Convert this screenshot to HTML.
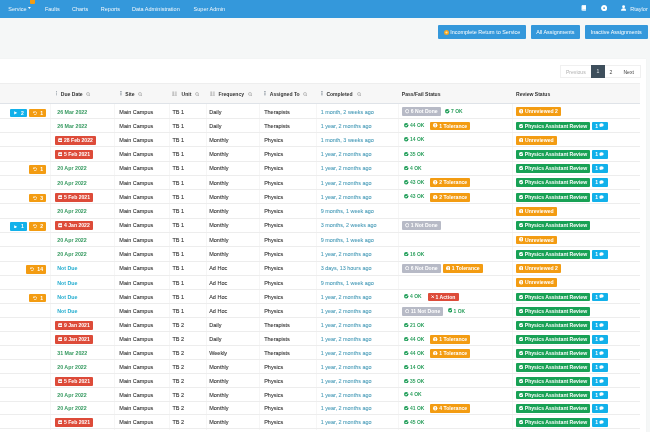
<!DOCTYPE html>
<html><head><meta charset="utf-8"><title>Assignments</title><style>
*{box-sizing:border-box;margin:0;padding:0}
html,body{width:650px;height:432px;overflow:hidden;background:#f5f7f7;font-family:"Liberation Sans",sans-serif;}
#w{position:absolute;left:0;top:0;width:650px;height:432px;will-change:transform;overflow:hidden}
.nav{position:absolute;left:0;top:0;width:650px;height:18.2px;background:#3498db;color:#fff;font-size:5.5px;}
.nav span.t{position:absolute;top:5.6px;line-height:6px;white-space:nowrap;color:#f2f7fb}
.panel{position:absolute;left:0;top:58.7px;width:646px;height:400px;background:#fff;box-shadow:0 0 1px rgba(0,0,0,0.06)}
.btn{position:absolute;top:25.4px;height:14px;background:#3498db;border-radius:1px;color:#fff;font-size:5.45px;line-height:14px;text-align:center;white-space:nowrap}
.pg{position:absolute;top:64.8px;height:13.4px;font-size:5.1px;line-height:13.4px;text-align:center;color:#444}
.thead{position:absolute;left:0;top:82.9px;width:640px;height:21.6px;background:#f7f7f7;border-bottom:0.8px solid #dfe3e8;border-top:0.5px solid #eeeeee}
.h{position:absolute;top:91.1px;line-height:6px;font-size:5.05px;font-weight:bold;color:#333;white-space:nowrap}
.row{position:absolute;left:0;width:640px;height:14.08px;border-bottom:0.6px solid #ededed;}
.c{position:absolute;top:-0.35px;height:14.08px;line-height:14.08px;font-size:5.5px;color:#363636;white-space:nowrap}
.c0{right:594px;text-align:right}
.c1{left:54.8px}
.c2{left:119.3px}
.c3{left:172.5px}
.c4{left:209.2px}
.c5{left:264.2px}
.c2,.c3,.c4,.c5{-webkit-text-stroke:0.1px #363636}
.c6{-webkit-text-stroke:0.08px #4c9db9}
.c6{left:320.7px;color:#4c9db9;font-size:5.45px}
.c7{left:401.8px}
.c8{left:516px}
.bd,.lb{display:inline-block;vertical-align:middle;height:8.9px;line-height:8.9px;padding:0 3.2px 0 3px;border-radius:1px;color:#fff;font-weight:bold;font-size:5.1px;margin-right:1.9px;position:relative;top:-0.3px}
.lb{margin-right:0;margin-left:2.4px;padding:0 3px 0 3.4px;top:0.6px;height:8.4px;line-height:8.4px}
.bl{background:#12b1ea}
.or{background:#f39c12}
.rd{background:#dd4b39}
.gy{background:#b7bac6}
.gr{background:#18a155}
.ic{vertical-align:middle;position:relative;top:-0.5px;margin-right:1.6px}
.cm{padding:0 3.6px 0 3px}
.cm .ic{margin-right:0;margin-left:1.2px}
.lb .n{margin-left:1.9px}
.dg{color:#35995f;font-weight:bold;margin-left:2.4px;font-size:5.3px}
.db{color:#27aed0;font-weight:bold;margin-left:2.4px;font-size:5.3px}
.ok{display:inline-block;vertical-align:middle;color:#2ea05f;font-weight:bold;font-size:4.95px;padding:0 4px 0 2.4px;margin-right:1.9px;position:relative;top:0.1px;}
.ok .ic{margin-right:1.5px}
.vsep{position:absolute;top:104px;width:0.5px;height:326px;background:#f6f6f6}
</style></head>
<body><div id="w">
<div class="nav">
<span class="t" style="left:8.3px">Service</span>
<svg style="position:absolute;left:28.4px;top:7.2px" width="2.8" height="2" viewBox="0 0 10 7"><path d="M0 0 H10 L5 7Z" fill="#fff"/></svg>
<div style="position:absolute;left:30.4px;top:0;width:4.4px;height:4.4px;background:#f39c12;border-radius:0 0 1px 1px"></div>
<span class="t" style="left:44.9px">Faults</span>
<span class="t" style="left:72px">Charts</span>
<span class="t" style="left:100.8px">Reports</span>
<span class="t" style="left:132px">Data Administration</span>
<span class="t" style="left:193.6px">Super Admin</span>
<svg style="position:absolute;left:580.5px;top:5.2px" width="5.5" height="6" viewBox="0 0 10 11"><path d="M2 1 H9 V8 H3 A1.3 1.3 0 0 0 3 10.2 H9" fill="none" stroke="#fff" stroke-width="1.4"/><rect x="2" y="1" width="7" height="7" fill="#fff"/><rect x="1" y="1" width="1.6" height="9" fill="#fff"/></svg>
<svg style="position:absolute;left:601px;top:5.2px" width="6.2" height="6.2" viewBox="0 0 10 10"><circle cx="5" cy="5" r="3.2" fill="none" stroke="#fff" stroke-width="3.4"/></svg>
<svg style="position:absolute;left:621px;top:5px" width="5.2" height="6" viewBox="0 0 10 11"><circle cx="5" cy="3" r="2.8" fill="#fff"/><path d="M0 11 Q0 6 5 6 Q10 6 10 11Z" fill="#fff"/></svg>
<span class="t" style="left:630.3px">Rtaylor</span>
</div>

<div class="btn" style="left:438px;width:88px"><svg width="5" height="5" viewBox="0 0 10 10" style="vertical-align:middle;position:relative;top:-0.4px;margin-right:1.5px"><circle cx="5" cy="5" r="5" fill="#f5a623"/><circle cx="5" cy="5" r="2.2" fill="#fde3a7"/></svg>Incomplete Return to Service</div>
<div class="btn" style="left:530.5px;width:49.7px">All Assignments</div>
<div class="btn" style="left:584.8px;width:63px">Inactive Assignments</div>

<div class="panel"></div>

<div class="pg" style="left:559.5px;width:31.7px;color:#b0b0b0;border:0.5px solid #f0f0f0;border-right:none">Previous</div>
<div class="pg" style="left:591.2px;width:13.5px;background:#3e4f5c;color:#dfe4e8">1</div>
<div class="pg" style="left:604.7px;width:12.5px;border:0.5px solid #f0f0f0;border-left:none;border-right:none">2</div>
<div class="pg" style="left:617.2px;width:24px;border:0.5px solid #f0f0f0;border-left:none">Next</div>

<div class="thead"></div>
<svg style="position:absolute;left:55.5px;top:91.4px" width="1.8" height="4.4" viewBox="0 0 4 10"><rect x="0.8" y="0.2" width="2.6" height="2.3" fill="#6f7b88"/><rect x="0.8" y="3.85" width="2.6" height="2.3" fill="#6f7b88"/><rect x="0.8" y="7.5" width="2.6" height="2.3" fill="#6f7b88"/></svg><div class="h" style="left:60.8px">Due Date</div><svg style="position:absolute;left:86.2px;top:91.7px" width="4.5" height="4.5" viewBox="0 0 10 10"><circle cx="4.4" cy="4.4" r="3.3" fill="none" stroke="#ababab" stroke-width="1.6"/><path d="M6.8 6.8 L9.4 9.4" stroke="#ababab" stroke-width="1.8"/></svg><svg style="position:absolute;left:120.0px;top:91.4px" width="1.8" height="4.4" viewBox="0 0 4 10"><rect x="0.8" y="0.2" width="2.6" height="2.3" fill="#6f7b88"/><rect x="0.8" y="3.85" width="2.6" height="2.3" fill="#6f7b88"/><rect x="0.8" y="7.5" width="2.6" height="2.3" fill="#6f7b88"/></svg><div class="h" style="left:125.3px">Site</div><svg style="position:absolute;left:137.9px;top:91.7px" width="4.5" height="4.5" viewBox="0 0 10 10"><circle cx="4.4" cy="4.4" r="3.3" fill="none" stroke="#ababab" stroke-width="1.6"/><path d="M6.8 6.8 L9.4 9.4" stroke="#ababab" stroke-width="1.8"/></svg><svg style="position:absolute;left:172.0px;top:90.9px" width="5.2" height="5.6" viewBox="0 0 10 10"><rect x="0.6" y="0.5" width="3.6" height="8.6" fill="#c4c4c4"/><rect x="5.6" y="0.5" width="3.6" height="8.6" fill="#cfcfcf"/><rect x="0" y="8.6" width="10" height="1.4" fill="#b5b5b5"/></svg><div class="h" style="left:181.6px">Unit</div><svg style="position:absolute;left:195.0px;top:91.7px" width="4.5" height="4.5" viewBox="0 0 10 10"><circle cx="4.4" cy="4.4" r="3.3" fill="none" stroke="#ababab" stroke-width="1.6"/><path d="M6.8 6.8 L9.4 9.4" stroke="#ababab" stroke-width="1.8"/></svg><svg style="position:absolute;left:209.8px;top:90.9px" width="5.2" height="5.6" viewBox="0 0 10 10"><rect x="0.6" y="0.5" width="3.6" height="8.6" fill="#c4c4c4"/><rect x="5.6" y="0.5" width="3.6" height="8.6" fill="#cfcfcf"/><rect x="0" y="8.6" width="10" height="1.4" fill="#b5b5b5"/></svg><div class="h" style="left:218.5px">Frequency</div><svg style="position:absolute;left:248.2px;top:91.7px" width="4.5" height="4.5" viewBox="0 0 10 10"><circle cx="4.4" cy="4.4" r="3.3" fill="none" stroke="#ababab" stroke-width="1.6"/><path d="M6.8 6.8 L9.4 9.4" stroke="#ababab" stroke-width="1.8"/></svg><svg style="position:absolute;left:264.3px;top:91.4px" width="1.8" height="4.4" viewBox="0 0 4 10"><rect x="0.8" y="0.2" width="2.6" height="2.3" fill="#6f7b88"/><rect x="0.8" y="3.85" width="2.6" height="2.3" fill="#6f7b88"/><rect x="0.8" y="7.5" width="2.6" height="2.3" fill="#6f7b88"/></svg><div class="h" style="left:269.8px">Assigned To</div><svg style="position:absolute;left:303.4px;top:91.7px" width="4.5" height="4.5" viewBox="0 0 10 10"><circle cx="4.4" cy="4.4" r="3.3" fill="none" stroke="#ababab" stroke-width="1.6"/><path d="M6.8 6.8 L9.4 9.4" stroke="#ababab" stroke-width="1.8"/></svg><svg style="position:absolute;left:320.9px;top:91.4px" width="1.8" height="4.4" viewBox="0 0 4 10"><rect x="0.8" y="0.2" width="2.6" height="2.3" fill="#6f7b88"/><rect x="0.8" y="3.85" width="2.6" height="2.3" fill="#6f7b88"/><rect x="0.8" y="7.5" width="2.6" height="2.3" fill="#6f7b88"/></svg><div class="h" style="left:326.4px">Completed</div><svg style="position:absolute;left:356.5px;top:91.7px" width="4.5" height="4.5" viewBox="0 0 10 10"><circle cx="4.4" cy="4.4" r="3.3" fill="none" stroke="#ababab" stroke-width="1.6"/><path d="M6.8 6.8 L9.4 9.4" stroke="#ababab" stroke-width="1.8"/></svg><div class="h" style="left:401.8px">Pass/Fail Status</div><div class="h" style="left:516.0px">Review Status</div>
<div class="vsep" style="left:49.8px"></div><div class="vsep" style="left:114px"></div><div class="vsep" style="left:169.2px"></div><div class="vsep" style="left:205.5px"></div><div class="vsep" style="left:258.7px"></div><div class="vsep" style="left:316px"></div><div class="vsep" style="left:397.5px"></div><div class="vsep" style="left:511.5px"></div>
<div class="row" style="top:104.93px;height:14.12px"><div class="c c0"><span class="lb bl" style="padding-left:4px"><svg class="ic" width="3.4" height="3.8" viewBox="0 0 9 10"><path d="M0.5 0.5 L8.8 5 L0.5 9.5Z" fill="#fff"/></svg><span class="n">2</span></span><span class="lb or"><svg class="ic" width="4.1" height="4.1" viewBox="0 0 10 10"><path d="M2.4 3.2 A3.7 3.7 0 1 1 2.2 7.2" fill="none" stroke="#fff" stroke-width="1.6"/><path d="M0.3 1.0 L4.6 2.6 L1.0 5.4Z" fill="#fff"/></svg><span class="n">1</span></span></div><div class="c c1"><span class="dg">26 Mar 2022</span></div><div class="c c2">Main Campus</div><div class="c c3">TB 1</div><div class="c c4">Daily</div><div class="c c5">Therapists</div><div class="c c6">1 month, 2 weeks ago</div><div class="c c7"><span class="bd gy"><svg class="ic" width="4.4" height="4.4" viewBox="0 0 10 10"><circle cx="5" cy="5" r="3.9" fill="none" stroke="#fff" stroke-width="1.9"/></svg>6 Not Done</span><span class="ok"><svg class="ic" width="4.4" height="4.4" viewBox="0 0 10 10"><circle cx="5" cy="5" r="5" fill="#1f9e58"/><path d="M2.4 5.2 L4.3 7.1 L7.7 3.3" fill="none" stroke="#fff" stroke-width="2"/></svg>7 OK</span></div><div class="c c8"><span class="bd or"><svg class="ic" width="4.4" height="4.4" viewBox="0 0 10 10"><circle cx="5" cy="5" r="5" fill="#fff"/><rect x="4.1" y="2" width="1.8" height="3.8" fill="#f39c12"/><rect x="4.1" y="6.6" width="1.8" height="1.6" fill="#f39c12"/></svg>Unreviewed 2</span></div></div><div class="row" style="top:119.05px;height:14.16px"><div class="c c0"></div><div class="c c1"><span class="dg">26 Mar 2022</span></div><div class="c c2">Main Campus</div><div class="c c3">TB 1</div><div class="c c4">Daily</div><div class="c c5">Therapists</div><div class="c c6">1 year, 2 months ago</div><div class="c c7"><span class="ok"><svg class="ic" width="4.4" height="4.4" viewBox="0 0 10 10"><circle cx="5" cy="5" r="5" fill="#1f9e58"/><path d="M2.4 5.2 L4.3 7.1 L7.7 3.3" fill="none" stroke="#fff" stroke-width="2"/></svg>44 OK</span><span class="bd or"><svg class="ic" width="4.4" height="4.4" viewBox="0 0 10 10"><circle cx="5" cy="5" r="5" fill="#fff"/><rect x="4.1" y="2" width="1.8" height="3.8" fill="#f39c12"/><rect x="4.1" y="6.6" width="1.8" height="1.6" fill="#f39c12"/></svg>1 Tolerance</span></div><div class="c c8"><span class="bd gr"><svg class="ic" width="4.2" height="4.2" viewBox="0 0 10 10"><circle cx="5" cy="5" r="5" fill="#fff"/><path d="M2.4 5.2 L4.3 7.1 L7.7 3.3" fill="none" stroke="#18a155" stroke-width="2"/></svg>Physics Assistant Review</span><span class="bd bl cm">1<svg class="ic" width="5" height="4.4" viewBox="0 0 10 10"><ellipse cx="5" cy="4.5" rx="5" ry="3.8" fill="#fff"/><path d="M1.5 6.5 L0.8 9.5 L4.5 7.8Z" fill="#fff"/></svg></span></div></div><div class="row" style="top:133.21px;height:14.20px"><div class="c c0"></div><div class="c c1"><span class="bd rd"><svg class="ic" width="4.6" height="4.6" viewBox="0 0 10 10"><rect x="0.5" y="0.5" width="9" height="9" rx="1.5" fill="#fff"/><rect x="2.2" y="4.1" width="5.6" height="1.8" fill="#c23d2c"/></svg>28 Feb 2022</span></div><div class="c c2">Main Campus</div><div class="c c3">TB 1</div><div class="c c4">Monthly</div><div class="c c5">Physics</div><div class="c c6">1 month, 3 weeks ago</div><div class="c c7"><span class="ok"><svg class="ic" width="4.4" height="4.4" viewBox="0 0 10 10"><circle cx="5" cy="5" r="5" fill="#1f9e58"/><path d="M2.4 5.2 L4.3 7.1 L7.7 3.3" fill="none" stroke="#fff" stroke-width="2"/></svg>14 OK</span></div><div class="c c8"><span class="bd or"><svg class="ic" width="4.4" height="4.4" viewBox="0 0 10 10"><circle cx="5" cy="5" r="5" fill="#fff"/><rect x="4.1" y="2" width="1.8" height="3.8" fill="#f39c12"/><rect x="4.1" y="6.6" width="1.8" height="1.6" fill="#f39c12"/></svg>Unreviewed</span></div></div><div class="row" style="top:147.42px;height:14.24px"><div class="c c0"></div><div class="c c1"><span class="bd rd"><svg class="ic" width="4.6" height="4.6" viewBox="0 0 10 10"><rect x="0.5" y="0.5" width="9" height="9" rx="1.5" fill="#fff"/><rect x="2.2" y="4.1" width="5.6" height="1.8" fill="#c23d2c"/></svg>5 Feb 2021</span></div><div class="c c2">Main Campus</div><div class="c c3">TB 1</div><div class="c c4">Monthly</div><div class="c c5">Physics</div><div class="c c6">1 year, 2 months ago</div><div class="c c7"><span class="ok"><svg class="ic" width="4.4" height="4.4" viewBox="0 0 10 10"><circle cx="5" cy="5" r="5" fill="#1f9e58"/><path d="M2.4 5.2 L4.3 7.1 L7.7 3.3" fill="none" stroke="#fff" stroke-width="2"/></svg>35 OK</span></div><div class="c c8"><span class="bd gr"><svg class="ic" width="4.2" height="4.2" viewBox="0 0 10 10"><circle cx="5" cy="5" r="5" fill="#fff"/><path d="M2.4 5.2 L4.3 7.1 L7.7 3.3" fill="none" stroke="#18a155" stroke-width="2"/></svg>Physics Assistant Review</span><span class="bd bl cm">1<svg class="ic" width="5" height="4.4" viewBox="0 0 10 10"><ellipse cx="5" cy="4.5" rx="5" ry="3.8" fill="#fff"/><path d="M1.5 6.5 L0.8 9.5 L4.5 7.8Z" fill="#fff"/></svg></span></div></div><div class="row" style="top:161.65px;height:14.26px"><div class="c c0"><span class="lb or"><svg class="ic" width="4.1" height="4.1" viewBox="0 0 10 10"><path d="M2.4 3.2 A3.7 3.7 0 1 1 2.2 7.2" fill="none" stroke="#fff" stroke-width="1.6"/><path d="M0.3 1.0 L4.6 2.6 L1.0 5.4Z" fill="#fff"/></svg><span class="n">1</span></span></div><div class="c c1"><span class="dg">20 Apr 2022</span></div><div class="c c2">Main Campus</div><div class="c c3">TB 1</div><div class="c c4">Monthly</div><div class="c c5">Physics</div><div class="c c6">1 year, 2 months ago</div><div class="c c7"><span class="ok"><svg class="ic" width="4.4" height="4.4" viewBox="0 0 10 10"><circle cx="5" cy="5" r="5" fill="#1f9e58"/><path d="M2.4 5.2 L4.3 7.1 L7.7 3.3" fill="none" stroke="#fff" stroke-width="2"/></svg>4 OK</span></div><div class="c c8"><span class="bd gr"><svg class="ic" width="4.2" height="4.2" viewBox="0 0 10 10"><circle cx="5" cy="5" r="5" fill="#fff"/><path d="M2.4 5.2 L4.3 7.1 L7.7 3.3" fill="none" stroke="#18a155" stroke-width="2"/></svg>Physics Assistant Review</span><span class="bd bl cm">1<svg class="ic" width="5" height="4.4" viewBox="0 0 10 10"><ellipse cx="5" cy="4.5" rx="5" ry="3.8" fill="#fff"/><path d="M1.5 6.5 L0.8 9.5 L4.5 7.8Z" fill="#fff"/></svg></span></div></div><div class="row" style="top:175.92px;height:14.28px"><div class="c c0"></div><div class="c c1"><span class="dg">20 Apr 2022</span></div><div class="c c2">Main Campus</div><div class="c c3">TB 1</div><div class="c c4">Monthly</div><div class="c c5">Physics</div><div class="c c6">1 year, 2 months ago</div><div class="c c7"><span class="ok"><svg class="ic" width="4.4" height="4.4" viewBox="0 0 10 10"><circle cx="5" cy="5" r="5" fill="#1f9e58"/><path d="M2.4 5.2 L4.3 7.1 L7.7 3.3" fill="none" stroke="#fff" stroke-width="2"/></svg>43 OK</span><span class="bd or"><svg class="ic" width="4.4" height="4.4" viewBox="0 0 10 10"><circle cx="5" cy="5" r="5" fill="#fff"/><rect x="4.1" y="2" width="1.8" height="3.8" fill="#f39c12"/><rect x="4.1" y="6.6" width="1.8" height="1.6" fill="#f39c12"/></svg>2 Tolerance</span></div><div class="c c8"><span class="bd gr"><svg class="ic" width="4.2" height="4.2" viewBox="0 0 10 10"><circle cx="5" cy="5" r="5" fill="#fff"/><path d="M2.4 5.2 L4.3 7.1 L7.7 3.3" fill="none" stroke="#18a155" stroke-width="2"/></svg>Physics Assistant Review</span><span class="bd bl cm">1<svg class="ic" width="5" height="4.4" viewBox="0 0 10 10"><ellipse cx="5" cy="4.5" rx="5" ry="3.8" fill="#fff"/><path d="M1.5 6.5 L0.8 9.5 L4.5 7.8Z" fill="#fff"/></svg></span></div></div><div class="row" style="top:190.20px;height:14.29px"><div class="c c0"><span class="lb or"><svg class="ic" width="4.1" height="4.1" viewBox="0 0 10 10"><path d="M2.4 3.2 A3.7 3.7 0 1 1 2.2 7.2" fill="none" stroke="#fff" stroke-width="1.6"/><path d="M0.3 1.0 L4.6 2.6 L1.0 5.4Z" fill="#fff"/></svg><span class="n">3</span></span></div><div class="c c1"><span class="bd rd"><svg class="ic" width="4.6" height="4.6" viewBox="0 0 10 10"><rect x="0.5" y="0.5" width="9" height="9" rx="1.5" fill="#fff"/><rect x="2.2" y="4.1" width="5.6" height="1.8" fill="#c23d2c"/></svg>5 Feb 2021</span></div><div class="c c2">Main Campus</div><div class="c c3">TB 1</div><div class="c c4">Monthly</div><div class="c c5">Physics</div><div class="c c6">1 year, 2 months ago</div><div class="c c7"><span class="ok"><svg class="ic" width="4.4" height="4.4" viewBox="0 0 10 10"><circle cx="5" cy="5" r="5" fill="#1f9e58"/><path d="M2.4 5.2 L4.3 7.1 L7.7 3.3" fill="none" stroke="#fff" stroke-width="2"/></svg>43 OK</span><span class="bd or"><svg class="ic" width="4.4" height="4.4" viewBox="0 0 10 10"><circle cx="5" cy="5" r="5" fill="#fff"/><rect x="4.1" y="2" width="1.8" height="3.8" fill="#f39c12"/><rect x="4.1" y="6.6" width="1.8" height="1.6" fill="#f39c12"/></svg>2 Tolerance</span></div><div class="c c8"><span class="bd gr"><svg class="ic" width="4.2" height="4.2" viewBox="0 0 10 10"><circle cx="5" cy="5" r="5" fill="#fff"/><path d="M2.4 5.2 L4.3 7.1 L7.7 3.3" fill="none" stroke="#18a155" stroke-width="2"/></svg>Physics Assistant Review</span><span class="bd bl cm">1<svg class="ic" width="5" height="4.4" viewBox="0 0 10 10"><ellipse cx="5" cy="4.5" rx="5" ry="3.8" fill="#fff"/><path d="M1.5 6.5 L0.8 9.5 L4.5 7.8Z" fill="#fff"/></svg></span></div></div><div class="row" style="top:204.49px;height:14.30px"><div class="c c0"></div><div class="c c1"><span class="dg">20 Apr 2022</span></div><div class="c c2">Main Campus</div><div class="c c3">TB 1</div><div class="c c4">Monthly</div><div class="c c5">Physics</div><div class="c c6">9 months, 1 week ago</div><div class="c c7"></div><div class="c c8"><span class="bd or"><svg class="ic" width="4.4" height="4.4" viewBox="0 0 10 10"><circle cx="5" cy="5" r="5" fill="#fff"/><rect x="4.1" y="2" width="1.8" height="3.8" fill="#f39c12"/><rect x="4.1" y="6.6" width="1.8" height="1.6" fill="#f39c12"/></svg>Unreviewed</span></div></div><div class="row" style="top:218.79px;height:14.29px"><div class="c c0"><span class="lb bl" style="padding-left:4px"><svg class="ic" width="3.4" height="3.8" viewBox="0 0 9 10"><path d="M0.5 0.5 L8.8 5 L0.5 9.5Z" fill="#fff"/></svg><span class="n">1</span></span><span class="lb or"><svg class="ic" width="4.1" height="4.1" viewBox="0 0 10 10"><path d="M2.4 3.2 A3.7 3.7 0 1 1 2.2 7.2" fill="none" stroke="#fff" stroke-width="1.6"/><path d="M0.3 1.0 L4.6 2.6 L1.0 5.4Z" fill="#fff"/></svg><span class="n">2</span></span></div><div class="c c1"><span class="bd rd"><svg class="ic" width="4.6" height="4.6" viewBox="0 0 10 10"><rect x="0.5" y="0.5" width="9" height="9" rx="1.5" fill="#fff"/><rect x="2.2" y="4.1" width="5.6" height="1.8" fill="#c23d2c"/></svg>4 Jan 2022</span></div><div class="c c2">Main Campus</div><div class="c c3">TB 1</div><div class="c c4">Monthly</div><div class="c c5">Physics</div><div class="c c6">3 months, 2 weeks ago</div><div class="c c7"><span class="bd gy"><svg class="ic" width="4.4" height="4.4" viewBox="0 0 10 10"><circle cx="5" cy="5" r="3.9" fill="none" stroke="#fff" stroke-width="1.9"/></svg>1 Not Done</span></div><div class="c c8"><span class="bd gr"><svg class="ic" width="4.2" height="4.2" viewBox="0 0 10 10"><circle cx="5" cy="5" r="5" fill="#fff"/><path d="M2.4 5.2 L4.3 7.1 L7.7 3.3" fill="none" stroke="#18a155" stroke-width="2"/></svg>Physics Assistant Review</span></div></div><div class="row" style="top:233.08px;height:14.28px"><div class="c c0"></div><div class="c c1"><span class="dg">20 Apr 2022</span></div><div class="c c2">Main Campus</div><div class="c c3">TB 1</div><div class="c c4">Monthly</div><div class="c c5">Physics</div><div class="c c6">9 months, 1 week ago</div><div class="c c7"></div><div class="c c8"><span class="bd or"><svg class="ic" width="4.4" height="4.4" viewBox="0 0 10 10"><circle cx="5" cy="5" r="5" fill="#fff"/><rect x="4.1" y="2" width="1.8" height="3.8" fill="#f39c12"/><rect x="4.1" y="6.6" width="1.8" height="1.6" fill="#f39c12"/></svg>Unreviewed</span></div></div><div class="row" style="top:247.37px;height:14.27px"><div class="c c0"></div><div class="c c1"><span class="dg">20 Apr 2022</span></div><div class="c c2">Main Campus</div><div class="c c3">TB 1</div><div class="c c4">Monthly</div><div class="c c5">Physics</div><div class="c c6">1 year, 2 months ago</div><div class="c c7"><span class="ok"><svg class="ic" width="4.4" height="4.4" viewBox="0 0 10 10"><circle cx="5" cy="5" r="5" fill="#1f9e58"/><path d="M2.4 5.2 L4.3 7.1 L7.7 3.3" fill="none" stroke="#fff" stroke-width="2"/></svg>16 OK</span></div><div class="c c8"><span class="bd gr"><svg class="ic" width="4.2" height="4.2" viewBox="0 0 10 10"><circle cx="5" cy="5" r="5" fill="#fff"/><path d="M2.4 5.2 L4.3 7.1 L7.7 3.3" fill="none" stroke="#18a155" stroke-width="2"/></svg>Physics Assistant Review</span><span class="bd bl cm">1<svg class="ic" width="5" height="4.4" viewBox="0 0 10 10"><ellipse cx="5" cy="4.5" rx="5" ry="3.8" fill="#fff"/><path d="M1.5 6.5 L0.8 9.5 L4.5 7.8Z" fill="#fff"/></svg></span></div></div><div class="row" style="top:261.63px;height:14.24px"><div class="c c0"><span class="lb or"><svg class="ic" width="4.1" height="4.1" viewBox="0 0 10 10"><path d="M2.4 3.2 A3.7 3.7 0 1 1 2.2 7.2" fill="none" stroke="#fff" stroke-width="1.6"/><path d="M0.3 1.0 L4.6 2.6 L1.0 5.4Z" fill="#fff"/></svg><span class="n">14</span></span></div><div class="c c1"><span class="db">Not Due</span></div><div class="c c2">Main Campus</div><div class="c c3">TB 1</div><div class="c c4">Ad Hoc</div><div class="c c5">Physics</div><div class="c c6">3 days, 13 hours ago</div><div class="c c7"><span class="bd gy"><svg class="ic" width="4.4" height="4.4" viewBox="0 0 10 10"><circle cx="5" cy="5" r="3.9" fill="none" stroke="#fff" stroke-width="1.9"/></svg>6 Not Done</span><span class="bd or"><svg class="ic" width="4.4" height="4.4" viewBox="0 0 10 10"><circle cx="5" cy="5" r="5" fill="#fff"/><rect x="4.1" y="2" width="1.8" height="3.8" fill="#f39c12"/><rect x="4.1" y="6.6" width="1.8" height="1.6" fill="#f39c12"/></svg>1 Tolerance</span></div><div class="c c8"><span class="bd or"><svg class="ic" width="4.4" height="4.4" viewBox="0 0 10 10"><circle cx="5" cy="5" r="5" fill="#fff"/><rect x="4.1" y="2" width="1.8" height="3.8" fill="#f39c12"/><rect x="4.1" y="6.6" width="1.8" height="1.6" fill="#f39c12"/></svg>Unreviewed 2</span></div></div><div class="row" style="top:275.88px;height:14.21px"><div class="c c0"></div><div class="c c1"><span class="db">Not Due</span></div><div class="c c2">Main Campus</div><div class="c c3">TB 1</div><div class="c c4">Ad Hoc</div><div class="c c5">Physics</div><div class="c c6">9 months, 1 week ago</div><div class="c c7"></div><div class="c c8"><span class="bd or"><svg class="ic" width="4.4" height="4.4" viewBox="0 0 10 10"><circle cx="5" cy="5" r="5" fill="#fff"/><rect x="4.1" y="2" width="1.8" height="3.8" fill="#f39c12"/><rect x="4.1" y="6.6" width="1.8" height="1.6" fill="#f39c12"/></svg>Unreviewed</span></div></div><div class="row" style="top:290.09px;height:14.17px"><div class="c c0"><span class="lb or"><svg class="ic" width="4.1" height="4.1" viewBox="0 0 10 10"><path d="M2.4 3.2 A3.7 3.7 0 1 1 2.2 7.2" fill="none" stroke="#fff" stroke-width="1.6"/><path d="M0.3 1.0 L4.6 2.6 L1.0 5.4Z" fill="#fff"/></svg><span class="n">1</span></span></div><div class="c c1"><span class="db">Not Due</span></div><div class="c c2">Main Campus</div><div class="c c3">TB 1</div><div class="c c4">Ad Hoc</div><div class="c c5">Physics</div><div class="c c6">1 year, 2 months ago</div><div class="c c7"><span class="ok"><svg class="ic" width="4.4" height="4.4" viewBox="0 0 10 10"><circle cx="5" cy="5" r="5" fill="#1f9e58"/><path d="M2.4 5.2 L4.3 7.1 L7.7 3.3" fill="none" stroke="#fff" stroke-width="2"/></svg>4 OK</span><span class="bd rd"><svg class="ic" width="3.4" height="3.4" viewBox="0 0 10 10"><path d="M1.5 1.5 L8.5 8.5 M8.5 1.5 L1.5 8.5" stroke="#fff" stroke-width="2.6"/></svg>1 Action</span></div><div class="c c8"><span class="bd gr"><svg class="ic" width="4.2" height="4.2" viewBox="0 0 10 10"><circle cx="5" cy="5" r="5" fill="#fff"/><path d="M2.4 5.2 L4.3 7.1 L7.7 3.3" fill="none" stroke="#18a155" stroke-width="2"/></svg>Physics Assistant Review</span><span class="bd bl cm">1<svg class="ic" width="5" height="4.4" viewBox="0 0 10 10"><ellipse cx="5" cy="4.5" rx="5" ry="3.8" fill="#fff"/><path d="M1.5 6.5 L0.8 9.5 L4.5 7.8Z" fill="#fff"/></svg></span></div></div><div class="row" style="top:304.26px;height:14.13px"><div class="c c0"></div><div class="c c1"><span class="db">Not Due</span></div><div class="c c2">Main Campus</div><div class="c c3">TB 1</div><div class="c c4">Ad Hoc</div><div class="c c5">Physics</div><div class="c c6">1 year, 2 months ago</div><div class="c c7"><span class="bd gy"><svg class="ic" width="4.4" height="4.4" viewBox="0 0 10 10"><circle cx="5" cy="5" r="3.9" fill="none" stroke="#fff" stroke-width="1.9"/></svg>11 Not Done</span><span class="ok"><svg class="ic" width="4.4" height="4.4" viewBox="0 0 10 10"><circle cx="5" cy="5" r="5" fill="#1f9e58"/><path d="M2.4 5.2 L4.3 7.1 L7.7 3.3" fill="none" stroke="#fff" stroke-width="2"/></svg>1 OK</span></div><div class="c c8"><span class="bd gr"><svg class="ic" width="4.2" height="4.2" viewBox="0 0 10 10"><circle cx="5" cy="5" r="5" fill="#fff"/><path d="M2.4 5.2 L4.3 7.1 L7.7 3.3" fill="none" stroke="#18a155" stroke-width="2"/></svg>Physics Assistant Review</span></div></div><div class="row" style="top:318.39px;height:14.07px"><div class="c c0"></div><div class="c c1"><span class="bd rd"><svg class="ic" width="4.6" height="4.6" viewBox="0 0 10 10"><rect x="0.5" y="0.5" width="9" height="9" rx="1.5" fill="#fff"/><rect x="2.2" y="4.1" width="5.6" height="1.8" fill="#c23d2c"/></svg>9 Jan 2021</span></div><div class="c c2">Main Campus</div><div class="c c3">TB 2</div><div class="c c4">Daily</div><div class="c c5">Therapists</div><div class="c c6">1 year, 2 months ago</div><div class="c c7"><span class="ok"><svg class="ic" width="4.4" height="4.4" viewBox="0 0 10 10"><circle cx="5" cy="5" r="5" fill="#1f9e58"/><path d="M2.4 5.2 L4.3 7.1 L7.7 3.3" fill="none" stroke="#fff" stroke-width="2"/></svg>21 OK</span></div><div class="c c8"><span class="bd gr"><svg class="ic" width="4.2" height="4.2" viewBox="0 0 10 10"><circle cx="5" cy="5" r="5" fill="#fff"/><path d="M2.4 5.2 L4.3 7.1 L7.7 3.3" fill="none" stroke="#18a155" stroke-width="2"/></svg>Physics Assistant Review</span><span class="bd bl cm">1<svg class="ic" width="5" height="4.4" viewBox="0 0 10 10"><ellipse cx="5" cy="4.5" rx="5" ry="3.8" fill="#fff"/><path d="M1.5 6.5 L0.8 9.5 L4.5 7.8Z" fill="#fff"/></svg></span></div></div><div class="row" style="top:332.46px;height:14.01px"><div class="c c0"></div><div class="c c1"><span class="bd rd"><svg class="ic" width="4.6" height="4.6" viewBox="0 0 10 10"><rect x="0.5" y="0.5" width="9" height="9" rx="1.5" fill="#fff"/><rect x="2.2" y="4.1" width="5.6" height="1.8" fill="#c23d2c"/></svg>9 Jan 2021</span></div><div class="c c2">Main Campus</div><div class="c c3">TB 2</div><div class="c c4">Daily</div><div class="c c5">Therapists</div><div class="c c6">1 year, 2 months ago</div><div class="c c7"><span class="ok"><svg class="ic" width="4.4" height="4.4" viewBox="0 0 10 10"><circle cx="5" cy="5" r="5" fill="#1f9e58"/><path d="M2.4 5.2 L4.3 7.1 L7.7 3.3" fill="none" stroke="#fff" stroke-width="2"/></svg>44 OK</span><span class="bd or"><svg class="ic" width="4.4" height="4.4" viewBox="0 0 10 10"><circle cx="5" cy="5" r="5" fill="#fff"/><rect x="4.1" y="2" width="1.8" height="3.8" fill="#f39c12"/><rect x="4.1" y="6.6" width="1.8" height="1.6" fill="#f39c12"/></svg>1 Tolerance</span></div><div class="c c8"><span class="bd gr"><svg class="ic" width="4.2" height="4.2" viewBox="0 0 10 10"><circle cx="5" cy="5" r="5" fill="#fff"/><path d="M2.4 5.2 L4.3 7.1 L7.7 3.3" fill="none" stroke="#18a155" stroke-width="2"/></svg>Physics Assistant Review</span><span class="bd bl cm">1<svg class="ic" width="5" height="4.4" viewBox="0 0 10 10"><ellipse cx="5" cy="4.5" rx="5" ry="3.8" fill="#fff"/><path d="M1.5 6.5 L0.8 9.5 L4.5 7.8Z" fill="#fff"/></svg></span></div></div><div class="row" style="top:346.48px;height:13.95px"><div class="c c0"></div><div class="c c1"><span class="dg">31 Mar 2022</span></div><div class="c c2">Main Campus</div><div class="c c3">TB 2</div><div class="c c4">Weekly</div><div class="c c5">Therapists</div><div class="c c6">1 year, 2 months ago</div><div class="c c7"><span class="ok"><svg class="ic" width="4.4" height="4.4" viewBox="0 0 10 10"><circle cx="5" cy="5" r="5" fill="#1f9e58"/><path d="M2.4 5.2 L4.3 7.1 L7.7 3.3" fill="none" stroke="#fff" stroke-width="2"/></svg>44 OK</span><span class="bd or"><svg class="ic" width="4.4" height="4.4" viewBox="0 0 10 10"><circle cx="5" cy="5" r="5" fill="#fff"/><rect x="4.1" y="2" width="1.8" height="3.8" fill="#f39c12"/><rect x="4.1" y="6.6" width="1.8" height="1.6" fill="#f39c12"/></svg>1 Tolerance</span></div><div class="c c8"><span class="bd gr"><svg class="ic" width="4.2" height="4.2" viewBox="0 0 10 10"><circle cx="5" cy="5" r="5" fill="#fff"/><path d="M2.4 5.2 L4.3 7.1 L7.7 3.3" fill="none" stroke="#18a155" stroke-width="2"/></svg>Physics Assistant Review</span><span class="bd bl cm">1<svg class="ic" width="5" height="4.4" viewBox="0 0 10 10"><ellipse cx="5" cy="4.5" rx="5" ry="3.8" fill="#fff"/><path d="M1.5 6.5 L0.8 9.5 L4.5 7.8Z" fill="#fff"/></svg></span></div></div><div class="row" style="top:360.42px;height:13.87px"><div class="c c0"></div><div class="c c1"><span class="dg">20 Apr 2022</span></div><div class="c c2">Main Campus</div><div class="c c3">TB 2</div><div class="c c4">Monthly</div><div class="c c5">Physics</div><div class="c c6">1 year, 2 months ago</div><div class="c c7"><span class="ok"><svg class="ic" width="4.4" height="4.4" viewBox="0 0 10 10"><circle cx="5" cy="5" r="5" fill="#1f9e58"/><path d="M2.4 5.2 L4.3 7.1 L7.7 3.3" fill="none" stroke="#fff" stroke-width="2"/></svg>14 OK</span></div><div class="c c8"><span class="bd gr"><svg class="ic" width="4.2" height="4.2" viewBox="0 0 10 10"><circle cx="5" cy="5" r="5" fill="#fff"/><path d="M2.4 5.2 L4.3 7.1 L7.7 3.3" fill="none" stroke="#18a155" stroke-width="2"/></svg>Physics Assistant Review</span><span class="bd bl cm">1<svg class="ic" width="5" height="4.4" viewBox="0 0 10 10"><ellipse cx="5" cy="4.5" rx="5" ry="3.8" fill="#fff"/><path d="M1.5 6.5 L0.8 9.5 L4.5 7.8Z" fill="#fff"/></svg></span></div></div><div class="row" style="top:374.30px;height:13.79px"><div class="c c0"></div><div class="c c1"><span class="bd rd"><svg class="ic" width="4.6" height="4.6" viewBox="0 0 10 10"><rect x="0.5" y="0.5" width="9" height="9" rx="1.5" fill="#fff"/><rect x="2.2" y="4.1" width="5.6" height="1.8" fill="#c23d2c"/></svg>5 Feb 2021</span></div><div class="c c2">Main Campus</div><div class="c c3">TB 2</div><div class="c c4">Monthly</div><div class="c c5">Physics</div><div class="c c6">1 year, 2 months ago</div><div class="c c7"><span class="ok"><svg class="ic" width="4.4" height="4.4" viewBox="0 0 10 10"><circle cx="5" cy="5" r="5" fill="#1f9e58"/><path d="M2.4 5.2 L4.3 7.1 L7.7 3.3" fill="none" stroke="#fff" stroke-width="2"/></svg>35 OK</span></div><div class="c c8"><span class="bd gr"><svg class="ic" width="4.2" height="4.2" viewBox="0 0 10 10"><circle cx="5" cy="5" r="5" fill="#fff"/><path d="M2.4 5.2 L4.3 7.1 L7.7 3.3" fill="none" stroke="#18a155" stroke-width="2"/></svg>Physics Assistant Review</span><span class="bd bl cm">1<svg class="ic" width="5" height="4.4" viewBox="0 0 10 10"><ellipse cx="5" cy="4.5" rx="5" ry="3.8" fill="#fff"/><path d="M1.5 6.5 L0.8 9.5 L4.5 7.8Z" fill="#fff"/></svg></span></div></div><div class="row" style="top:388.09px;height:13.70px"><div class="c c0"></div><div class="c c1"><span class="dg">20 Apr 2022</span></div><div class="c c2">Main Campus</div><div class="c c3">TB 2</div><div class="c c4">Monthly</div><div class="c c5">Physics</div><div class="c c6">1 year, 2 months ago</div><div class="c c7"><span class="ok"><svg class="ic" width="4.4" height="4.4" viewBox="0 0 10 10"><circle cx="5" cy="5" r="5" fill="#1f9e58"/><path d="M2.4 5.2 L4.3 7.1 L7.7 3.3" fill="none" stroke="#fff" stroke-width="2"/></svg>4 OK</span></div><div class="c c8"><span class="bd gr"><svg class="ic" width="4.2" height="4.2" viewBox="0 0 10 10"><circle cx="5" cy="5" r="5" fill="#fff"/><path d="M2.4 5.2 L4.3 7.1 L7.7 3.3" fill="none" stroke="#18a155" stroke-width="2"/></svg>Physics Assistant Review</span><span class="bd bl cm">1<svg class="ic" width="5" height="4.4" viewBox="0 0 10 10"><ellipse cx="5" cy="4.5" rx="5" ry="3.8" fill="#fff"/><path d="M1.5 6.5 L0.8 9.5 L4.5 7.8Z" fill="#fff"/></svg></span></div></div><div class="row" style="top:401.79px;height:13.61px"><div class="c c0"></div><div class="c c1"><span class="dg">20 Apr 2022</span></div><div class="c c2">Main Campus</div><div class="c c3">TB 2</div><div class="c c4">Monthly</div><div class="c c5">Physics</div><div class="c c6">1 year, 2 months ago</div><div class="c c7"><span class="ok"><svg class="ic" width="4.4" height="4.4" viewBox="0 0 10 10"><circle cx="5" cy="5" r="5" fill="#1f9e58"/><path d="M2.4 5.2 L4.3 7.1 L7.7 3.3" fill="none" stroke="#fff" stroke-width="2"/></svg>41 OK</span><span class="bd or"><svg class="ic" width="4.4" height="4.4" viewBox="0 0 10 10"><circle cx="5" cy="5" r="5" fill="#fff"/><rect x="4.1" y="2" width="1.8" height="3.8" fill="#f39c12"/><rect x="4.1" y="6.6" width="1.8" height="1.6" fill="#f39c12"/></svg>4 Tolerance</span></div><div class="c c8"><span class="bd gr"><svg class="ic" width="4.2" height="4.2" viewBox="0 0 10 10"><circle cx="5" cy="5" r="5" fill="#fff"/><path d="M2.4 5.2 L4.3 7.1 L7.7 3.3" fill="none" stroke="#18a155" stroke-width="2"/></svg>Physics Assistant Review</span><span class="bd bl cm">1<svg class="ic" width="5" height="4.4" viewBox="0 0 10 10"><ellipse cx="5" cy="4.5" rx="5" ry="3.8" fill="#fff"/><path d="M1.5 6.5 L0.8 9.5 L4.5 7.8Z" fill="#fff"/></svg></span></div></div><div class="row" style="top:415.40px;height:13.50px"><div class="c c0"></div><div class="c c1"><span class="bd rd"><svg class="ic" width="4.6" height="4.6" viewBox="0 0 10 10"><rect x="0.5" y="0.5" width="9" height="9" rx="1.5" fill="#fff"/><rect x="2.2" y="4.1" width="5.6" height="1.8" fill="#c23d2c"/></svg>5 Feb 2021</span></div><div class="c c2">Main Campus</div><div class="c c3">TB 2</div><div class="c c4">Monthly</div><div class="c c5">Physics</div><div class="c c6">1 year, 2 months ago</div><div class="c c7"><span class="ok"><svg class="ic" width="4.4" height="4.4" viewBox="0 0 10 10"><circle cx="5" cy="5" r="5" fill="#1f9e58"/><path d="M2.4 5.2 L4.3 7.1 L7.7 3.3" fill="none" stroke="#fff" stroke-width="2"/></svg>45 OK</span></div><div class="c c8"><span class="bd gr"><svg class="ic" width="4.2" height="4.2" viewBox="0 0 10 10"><circle cx="5" cy="5" r="5" fill="#fff"/><path d="M2.4 5.2 L4.3 7.1 L7.7 3.3" fill="none" stroke="#18a155" stroke-width="2"/></svg>Physics Assistant Review</span><span class="bd bl cm">1<svg class="ic" width="5" height="4.4" viewBox="0 0 10 10"><ellipse cx="5" cy="4.5" rx="5" ry="3.8" fill="#fff"/><path d="M1.5 6.5 L0.8 9.5 L4.5 7.8Z" fill="#fff"/></svg></span></div></div>
</div></body></html>
